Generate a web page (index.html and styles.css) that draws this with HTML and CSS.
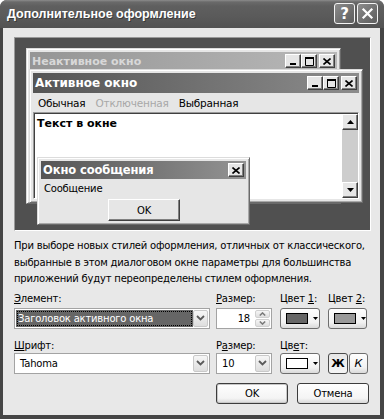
FILE: index.html
```html
<!DOCTYPE html>
<html>
<head>
<meta charset="utf-8">
<link rel="stylesheet" href="styles.css">
</head>
<body>
<div class="dialog">
  <div class="titlebar">
    <span class="title">Дополнительное оформление</span>
    <span class="cap-btn help">?</span>
    <span class="cap-btn close"><svg width="13" height="13" viewBox="0 0 13 13"><path d="M2.5 2.5L10.5 10.5M10.5 2.5L2.5 10.5" stroke="#fff" stroke-width="2.2" stroke-linecap="square"/></svg></span>
  </div>
  <div class="client">
    <div class="preview">
      <div class="win inactive">
        <div class="caption">
          <span class="cap-text">Неактивное окно</span>
          <span class="cbtns">
            <span class="cb"><svg width="8" height="8" viewBox="0 0 8 8"><rect x="1" y="6" width="6" height="2" fill="#000"/></svg></span>
            <span class="cb"><svg width="9" height="9" viewBox="0 0 9 9"><path d="M0.5 1.5H8.5V8.5H0.5Z" fill="none" stroke="#000"/><rect x="0" y="0" width="9" height="2" fill="#000"/></svg></span>
            <span class="cb gap"><svg width="8" height="7" viewBox="0 0 8 7"><path d="M0.5 0.5L7.5 6.5M7.5 0.5L0.5 6.5" stroke="#000" stroke-width="1.6"/></svg></span>
          </span>
        </div>
      </div>
      <div class="win active">
        <div class="caption">
          <span class="cap-text">Активное окно</span>
          <span class="cbtns">
            <span class="cb"><svg width="8" height="8" viewBox="0 0 8 8"><rect x="1" y="6" width="6" height="2" fill="#000"/></svg></span>
            <span class="cb"><svg width="9" height="9" viewBox="0 0 9 9"><path d="M0.5 1.5H8.5V8.5H0.5Z" fill="none" stroke="#000"/><rect x="0" y="0" width="9" height="2" fill="#000"/></svg></span>
            <span class="cb gap"><svg width="8" height="7" viewBox="0 0 8 7"><path d="M0.5 0.5L7.5 6.5M7.5 0.5L0.5 6.5" stroke="#000" stroke-width="1.6"/></svg></span>
          </span>
        </div>
        <div class="menubar">
          <span>Обычная</span>
          <span class="dis">Отключенная</span>
          <span>Выбранная</span>
        </div>
        <div class="wtext">
          <div class="wtext-body">Текст в окне</div>
          <div class="sbar">
            <span class="cb sb"><svg width="7" height="4" viewBox="0 0 7 4"><path d="M3.5 0L7 4H0Z" fill="#000"/></svg></span>
            <span class="track"></span>
            <span class="cb sb"><svg width="7" height="4" viewBox="0 0 7 4"><path d="M0 0H7L3.5 4Z" fill="#000"/></svg></span>
          </div>
        </div>
      </div>
      <div class="win msg">
        <div class="caption">
          <span class="cap-text">Окно сообщения</span>
          <span class="cb"><svg width="8" height="7" viewBox="0 0 8 7"><path d="M0.5 0.5L7.5 6.5M7.5 0.5L0.5 6.5" stroke="#000" stroke-width="1.6"/></svg></span>
        </div>
        <div class="msg-text">Сообщение</div>
        <div class="msg-actions"><span class="cbutton">OK</span></div>
      </div>
    </div>

    <p class="note">При выборе новых стилей оформления, отличных от классического,<br>выбранные в этом диалоговом окне параметры для большинства<br>приложений будут переопределены стилем оформления.</p>

    <div class="grid">
      <label class="lbl"><u>Э</u>лемент:</label>
      <label class="lbl"><u>Р</u>азмер:</label>
      <label class="lbl">Цвет <u>1</u>:</label>
      <label class="lbl">Цвет <u>2</u>:</label>

      <div class="combo wide">
        <span class="combo-val sel"><span class="focus">Заголовок активного окна</span></span>
        <span class="dd"><svg width="9" height="6" viewBox="0 0 9 6"><path d="M1 1L4.5 4.5L8 1" fill="none" stroke="#5a5a5a" stroke-width="1.8"/></svg></span>
      </div>
      <div class="combo spin">
        <span class="combo-val num">18</span>
        <span class="spins">
          <span class="sp"><svg width="7" height="4" viewBox="0 0 7 4"><path d="M0.8 3.5L3.5 0.9L6.2 3.5" fill="none" stroke="#7a7a7a" stroke-width="1.5"/></svg></span>
          <span class="sp"><svg width="7" height="4" viewBox="0 0 7 4"><path d="M0.8 0.5L3.5 3.1L6.2 0.5" fill="none" stroke="#7a7a7a" stroke-width="1.5"/></svg></span>
        </span>
      </div>
      <div class="colorbtn"><span class="swatch c1"></span><span class="sep"></span><svg class="arr" width="5" height="3" viewBox="0 0 5 3"><path d="M0 0H5L2.5 3Z" fill="#000"/></svg></div>
      <div class="colorbtn narrow"><span class="swatch c2"></span><span class="sep"></span><svg class="arr" width="5" height="3" viewBox="0 0 5 3"><path d="M0 0H5L2.5 3Z" fill="#000"/></svg></div>

      <label class="lbl r2"><u>Ш</u>рифт:</label>
      <label class="lbl r2">Р<u>а</u>змер:</label>
      <label class="lbl r2">Цв<u>е</u>т:</label>
      <span></span>

      <div class="combo wide r2c">
        <span class="combo-val">Tahoma</span>
        <span class="dd"><svg width="9" height="6" viewBox="0 0 9 6"><path d="M1 1L4.5 4.5L8 1" fill="none" stroke="#5a5a5a" stroke-width="1.8"/></svg></span>
      </div>
      <div class="combo spin r2c">
        <span class="combo-val">10</span>
        <span class="dd"><svg width="9" height="6" viewBox="0 0 9 6"><path d="M1 1L4.5 4.5L8 1" fill="none" stroke="#5a5a5a" stroke-width="1.8"/></svg></span>
      </div>
      <div class="colorbtn r2c"><span class="swatch c3"></span><span class="sep"></span><svg class="arr" width="5" height="3" viewBox="0 0 5 3"><path d="M0 0H5L2.5 3Z" fill="#000"/></svg></div>
      <div class="bi r2c">
        <span class="tbtn bold">Ж</span>
        <span class="tbtn ital">К</span>
      </div>
    </div>

    <div class="actions">
      <span class="pbtn def">OK</span>
      <span class="pbtn">Отмена</span>
    </div>
  </div>
</div>
</body>
</html>
```

FILE: styles.css
```css
* { box-sizing: border-box; margin: 0; padding: 0; }
html, body { width: 384px; height: 419px; overflow: hidden; background: #fff; }
body {
  font-family: "DejaVu Sans", "Liberation Sans", sans-serif;
  font-size: 10px;
  letter-spacing: -0.2px;
  color: #000;
}

.dialog {
  width: 384px;
  height: 419px;
  display: flex;
  flex-direction: column;
  background: #454545;
  border-radius: 7px 7px 0 0;
  overflow: hidden;
}

.titlebar {
  height: 28px;
  display: flex;
  align-items: center;
  gap: 2px;
  padding: 0 6px 1px 7px;
  background: linear-gradient(#8c8c8c 0, #6a6a6a 2px, #5f5f5f 6px, #5a5a5a 60%, #525252 100%);
}
.title {
  flex: 1;
  color: #fff;
  font-family: "Liberation Sans", sans-serif;
  font-weight: bold;
  font-size: 12.5px;
  letter-spacing: 0;
  text-shadow: 1px 1px 0 #3a3a3a;
}
.cap-btn {
  width: 21px;
  height: 21px;
  border: 1px solid #f4f4f4;
  border-radius: 3px;
  display: flex;
  align-items: center;
  justify-content: center;
  color: #fff;
  font-weight: bold;
  font-size: 15px;
  letter-spacing: 0;
  background: linear-gradient(135deg, #8d8d8d, #6e6e6e 60%, #5e5e5e);
}

.client {
  flex: 1;
  margin: 0 4px 4px 3px;
  background: #e8e8e8;
  padding: 9px 0 0 11px;
  display: flex;
  flex-direction: column;
}

/* ---------- preview canvas ---------- */
.preview {
  position: relative;
  width: 357px;
  height: 194px;
  background: #505050;
  border: 1px solid;
  border-color: #9a9a9a #fff #fff #9a9a9a;
  flex: none;
}
.win {
  position: absolute;
  background: #e6e6e6;
  border: 1px solid;
  border-color: #dcdcdc #6a6a6a #6a6a6a #dcdcdc;
  box-shadow: inset 1px 1px #fff, inset -1px -1px #a8a8a8;
  padding: 3px;
  display: flex;
  flex-direction: column;
}
.inactive { left: 11px; top: 10px; width: 315px; height: 156px; }
.active { left: 14px; top: 31px; width: 334px; height: 134px; }
.msg { left: 22px; top: 119px; width: 213px; height: 68px; }

.caption {
  height: 18px;
  display: flex;
  align-items: center;
  padding: 0 2px 0 2px;
  font-weight: bold;
  font-size: 11px;
  letter-spacing: 0;
  color: #fff;
  flex: none;
}
.cap-text { flex: 1; white-space: nowrap; }
.inactive .caption { background: linear-gradient(90deg, #959595, #b8b8b8); color: #d8d8d8; }
.active .caption { height: 20px; background: linear-gradient(90deg, #555, #8c8c8c); font-size: 12px; }
.msg .caption { background: linear-gradient(90deg, #555, #939393); font-size: 11.5px; letter-spacing: -0.1px; }

.cbtns { display: flex; }
.cb {
  width: 16px;
  height: 14px;
  background: #e6e6e6;
  border: 1px solid;
  border-color: #fff #404040 #404040 #fff;
  box-shadow: inset -1px -1px #808080;
  display: flex;
  align-items: center;
  justify-content: center;
}
.cb.gap { margin-left: 2px; }

.menubar {
  height: 19px;
  display: flex;
  align-items: center;
  gap: 10px;
  padding-left: 5px;
  font-size: 10.5px;
  flex: none;
}
.menubar .dis { color: #a8a8a8; }

.wtext {
  flex: 1;
  display: flex;
  border: 1px solid;
  border-color: #9a9a9a #fff #fff #9a9a9a;
  box-shadow: inset 1px 1px #404040;
  background: #fff;
  padding: 1px 0 0 1px;
}
.wtext-body {
  flex: 1;
  padding: 3px 2px;
  font-weight: bold;
  font-size: 11px;
  letter-spacing: 0;
}
.sbar { width: 16px; display: flex; flex-direction: column; background: #cdcdcd; }
.sb { width: 16px; height: 16px; }
.track { flex: 1; }

.msg-text { padding: 4px 3px 0; font-size: 10px; height: 20px; }
.msg-actions { display: flex; padding-left: 67px; }
.cbutton {
  width: 72px;
  height: 22px;
  display: flex;
  align-items: center;
  justify-content: center;
  background: #e6e6e6;
  border: 1px solid;
  border-color: #fff #404040 #404040 #fff;
  box-shadow: inset -1px -1px #808080;
  font-size: 10px;
}

/* ---------- note ---------- */
.note {
  margin-top: 7px;
  line-height: 16.5px;
  white-space: nowrap;
}

/* ---------- controls ---------- */
.grid {
  margin-top: 4px;
  display: grid;
  grid-template-columns: 202px 64px 48px 41px;
  grid-template-rows: 14px 21px 14px 21px;
  row-gap: 2px;
}
.lbl { line-height: 14px; }
.lbl.r2 { margin-top: 8px; }
.r2c { margin-top: 6px; }

.combo {
  height: 21px;
  background: #fff;
  border: 1px solid #a3a3a3;
  display: flex;
  align-items: center;
  padding: 1px;
}
.combo.wide { width: 196px; }
.combo.spin { width: 56px; }
.combo-val {
  flex: 1;
  height: 100%;
  display: flex;
  align-items: center;
  padding-left: 4px;
  white-space: nowrap;
  overflow: hidden;
}
.combo-val.sel { background: #666; color: #fff; padding: 1px; }
.focus {
  width: 100%;
  height: 100%;
  display: flex;
  align-items: center;
  padding-left: 1px;
  outline: 1px dotted #000;
  outline-offset: -1px;
}
.combo-val.num { justify-content: flex-end; padding-right: 5px; }
.dd {
  width: 15px;
  height: 17px;
  border: 1px solid #c9c9c9;
  border-radius: 2px;
  background: linear-gradient(#f6f6f6, #dedede);
  display: flex;
  align-items: center;
  justify-content: center;
  flex: none;
}
.spins { display: flex; flex-direction: column; gap: 1px; flex: none; }
.sp {
  width: 15px;
  height: 8px;
  border: 1px solid #d0d0d0;
  border-radius: 2px;
  background: linear-gradient(#f6f6f6, #dedede);
  display: flex;
  align-items: center;
  justify-content: center;
}

.colorbtn {
  width: 40px;
  height: 21px;
  border: 1px solid #6e6e6e;
  border-radius: 3px;
  background: linear-gradient(#fefefe, #f2f2f2 70%, #dadada);
  display: flex;
  align-items: center;
  padding: 0 3px 0 5px;
}
.colorbtn.narrow { width: 39px; }
.swatch {
  width: 22px;
  height: 11px;
  border: 1px solid #000;
  flex: none;
}
.swatch.c1 { background: #666; }
.swatch.c2 { background: #999; }
.swatch.c3 { background: #fff; }
.sep { width: 1px; height: 13px; background: #a0a0a0; margin: 0 2px 0 3px; }
.arr { flex: none; }

.bi { display: flex; gap: 1px; }
.tbtn {
  width: 20px;
  height: 21px;
  border: 1px solid #6e6e6e;
  border-radius: 3px;
  background: linear-gradient(#fefefe, #f2f2f2 70%, #dadada);
  display: flex;
  align-items: center;
  justify-content: center;
  font-size: 11px;
  letter-spacing: 0;
}
.tbtn.bold { font-weight: bold; background: linear-gradient(#e6e6e6, #f4f4f4); border-color: #4a4a4a; }
.tbtn.ital { font-style: italic; width: 19px; }

/* ---------- actions ---------- */
.actions {
  margin-top: 15px;
  margin-right: 11px;
  display: flex;
  justify-content: flex-end;
  gap: 9px;
}
.pbtn {
  width: 72px;
  height: 21px;
  border: 1px solid #3c3c3c;
  border-radius: 3px;
  background: linear-gradient(#fefefe, #f4f4f4 75%, #d8d8d8);
  display: flex;
  align-items: center;
  justify-content: center;
}
.pbtn.def { box-shadow: inset 0 0 0 1px #c8c8c8; }
```
